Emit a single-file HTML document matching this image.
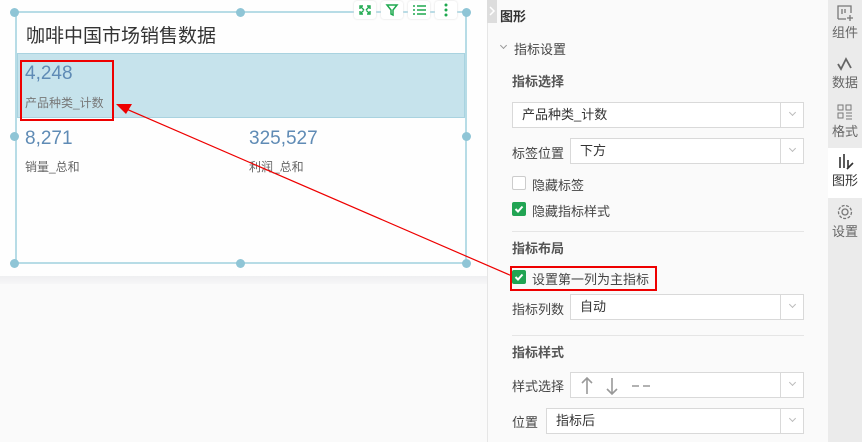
<!DOCTYPE html>
<html><head><meta charset="utf-8"><style>
*{margin:0;padding:0;box-sizing:border-box}
body{width:862px;height:442px;overflow:hidden;background:#fafafa;font-family:"Liberation Sans","Noto Sans CJK SC",sans-serif;position:relative;color:#333}
.a{position:absolute}
.h{position:absolute;width:9px;height:9px;border-radius:50%;background:#8fc5d6}
.sel{position:absolute;border:1px solid #d9d9d9;background:#fff;height:26px;font-size:13px;color:#333;line-height:24px;padding-left:9px}
.sel:after{content:"";position:absolute;right:0;top:0;width:22px;height:24px;border-left:1px solid #d9d9d9}
.sel i{position:absolute;right:8px;top:7px;width:5px;height:5px;border-right:1px solid #bbb;border-bottom:1px solid #bbb;transform:rotate(45deg)}
.lbl{position:absolute;font-size:13px;color:#444}
.b{font-weight:bold;color:#555}
.cb{position:absolute;width:14px;height:14px;border-radius:2px}
.sb{position:absolute;left:828px;width:34px;text-align:center;font-size:13px;color:#666}
</style></head><body>
<div class="a" style="left:0;top:0;width:487px;height:276px;background:#fefefe"></div>
<div class="a" style="left:0;top:276px;width:487px;height:8px;background:linear-gradient(#eeeff1,#f6f6f7)"></div>
<div class="a" style="left:487px;top:0;width:1px;height:442px;background:#e6e6e6"></div>
<div class="a" style="left:15px;top:11px;width:452px;height:253px;border:2px solid #b7dce6"></div>
<div class="h" style="left:10px;top:8px"></div><div class="h" style="left:236px;top:8px"></div><div class="h" style="left:462px;top:8px"></div>
<div class="h" style="left:10px;top:132px"></div><div class="h" style="left:462px;top:132px"></div>
<div class="h" style="left:10px;top:259px"></div><div class="h" style="left:236px;top:259px"></div><div class="h" style="left:462px;top:259px"></div>
<div class="a" style="left:354px;top:1px;width:22px;height:18px;background:#fff;border-radius:3px;box-shadow:0 0 2px #ddd"><svg width="22" height="18"><path d="M6 8V5h3M13 5h3v3M16 10v3h-3M9 13H6v-3M7 6l3 3M15 6l-3 3M15 12l-3-3M7 12l3-3" stroke="#1ea94f" stroke-width="1.4" fill="none"/></svg></div>
<div class="a" style="left:381px;top:1px;width:22px;height:18px;background:#fff;border-radius:3px;box-shadow:0 0 2px #ddd"><svg width="22" height="18"><path d="M6 4h10l-4 5v5l-2-1V9z" stroke="#1ea94f" stroke-width="1.5" fill="none"/></svg></div>
<div class="a" style="left:408px;top:1px;width:22px;height:18px;background:#fff;border-radius:3px;box-shadow:0 0 2px #ddd"><svg width="22" height="18"><path d="M5 5h2M9 5h9M5 9h2M9 9h9M5 13h2M9 13h9" stroke="#1ea94f" stroke-width="1.6"/></svg></div>
<div class="a" style="left:435px;top:1px;width:22px;height:18px;background:#fff;border-radius:3px;box-shadow:0 0 2px #ddd"><svg width="22" height="18"><circle cx="11" cy="4" r="1.5" fill="#1ea94f"/><circle cx="11" cy="9" r="1.5" fill="#1ea94f"/><circle cx="11" cy="14" r="1.5" fill="#1ea94f"/></svg></div>
<div class="a" style="left:26px;top:21px;font-size:19px;color:#333">咖啡中国市场销售数据</div>
<div class="a" style="left:17px;top:53px;width:448px;height:65px;background:#c6e3ec;border:1px solid #a9d3e0"></div>
<div class="a" style="left:25px;top:63px;font-size:19px;color:#5f8bb5">4,248</div>
<div class="a" style="left:25px;top:94px;font-size:12px;color:#777">产品种类_计数</div>
<div class="a" style="left:20px;top:60px;width:94px;height:61px;border:2px solid #e00"></div>
<div class="a" style="left:25px;top:128px;font-size:19px;color:#5f8bb5">8,271</div>
<div class="a" style="left:25px;top:158px;font-size:12px;color:#666">销量_总和</div>
<div class="a" style="left:249px;top:128px;font-size:19px;color:#5f8bb5">325,527</div>
<div class="a" style="left:249px;top:158px;font-size:12px;color:#666">利润_总和</div>
<div class="a" style="left:487px;top:0;width:10px;height:23px;background:#ddd"><svg width="10" height="23"><path d="M3 7l4 4-4 4" stroke="#fff" stroke-width="1.5" fill="none"/></svg></div>
<div class="a b" style="left:500px;top:6px;font-size:13px;color:#333">图形</div>
<div class="a" style="left:501px;top:43px;width:5px;height:5px;border-right:1px solid #999;border-bottom:1px solid #999;transform:rotate(45deg)"></div>
<div class="lbl" style="left:514px;top:39px;color:#444">指标设置</div>
<div class="lbl b" style="left:512px;top:71px">指标选择</div>
<div class="sel" style="left:512px;top:102px;width:292px">产品种类_计数<i></i></div>
<div class="lbl" style="left:512px;top:143px">标签位置</div>
<div class="sel" style="left:570px;top:138px;width:234px">下方<i></i></div>
<div class="cb" style="left:512px;top:176px;border:1px solid #ccc;background:#fff"></div>
<div class="lbl" style="left:532px;top:175px">隐藏标签</div>
<div class="cb" style="left:512px;top:202px;background:#21a453"><svg width="14" height="14"><path d="M3.5 7l2.5 2.5 4.5-5" stroke="#fff" stroke-width="2" fill="none"/></svg></div>
<div class="lbl" style="left:532px;top:201px">隐藏指标样式</div>
<div class="a" style="left:512px;top:231px;width:292px;height:1px;background:#e5e5e5"></div>
<div class="lbl b" style="left:512px;top:238px">指标布局</div>
<div class="a" style="left:510px;top:266px;width:147px;height:25px;border:2px solid #e00"></div>
<div class="cb" style="left:512px;top:270px;background:#21a453"><svg width="14" height="14"><path d="M3.5 7l2.5 2.5 4.5-5" stroke="#fff" stroke-width="2" fill="none"/></svg></div>
<div class="lbl" style="left:532px;top:269px">设置第一列为主指标</div>
<div class="lbl" style="left:512px;top:299px">指标列数</div>
<div class="sel" style="left:570px;top:294px;width:234px">自动<i></i></div>
<div class="a" style="left:512px;top:335px;width:292px;height:1px;background:#e5e5e5"></div>
<div class="lbl b" style="left:512px;top:342px">指标样式</div>
<div class="lbl" style="left:512px;top:376px">样式选择</div>
<div class="sel" style="left:570px;top:372px;width:234px;color:#999;padding-left:9px"><svg width="80" height="22" style="margin-top:2px"><path d="M7 3v16M2 8l5-5 5 5M32 3v16M27 14l5 5 5-5" stroke="#999" stroke-width="1.6" fill="none"/><path d="M52 11h7M63 11h7" stroke="#999" stroke-width="1.6"/></svg><i></i></div>
<div class="lbl" style="left:512px;top:412px">位置</div>
<div class="sel" style="left:546px;top:408px;width:258px">指标后<i></i></div>
<div class="a" style="left:828px;top:0;width:34px;height:442px;background:#ebebeb"></div>
<div class="a" style="left:828px;top:148px;width:34px;height:50px;background:#fff"></div>
<div class="sb" style="top:3px"><svg width="20" height="20"><path d="M3 16V3h13v7M3 16h8M7 6v5M10 6v4M15 12v6M12 15h6" stroke="#777" stroke-width="1.3" fill="none"/></svg><div style="margin-top:-4px">组件</div></div>
<div class="sb" style="top:54px"><svg width="20" height="18"><path d="M3 10l3 5 5-10 5 9" stroke="#666" stroke-width="1.8" fill="none"/></svg><div style="margin-top:-3px">数据</div></div>
<div class="sb" style="top:103px"><svg width="20" height="18"><rect x="3" y="2" width="5" height="5" stroke="#777" fill="none"/><rect x="3" y="10" width="5" height="5" stroke="#777" fill="none"/><rect x="11" y="2" width="5" height="5" stroke="#777" fill="none"/><path d="M11 10h6M11 13h6M11 16h6" stroke="#777"/></svg><div style="margin-top:-3px">格式</div></div>
<div class="sb" style="top:152px;color:#333"><svg width="20" height="18"><path d="M5 5v11M9 2v14M13 8v8M12 17l6-6" stroke="#333" stroke-width="1.6" fill="none"/></svg><div style="margin-top:-3px">图形</div></div>
<div class="sb" style="top:203px"><svg width="20" height="18"><circle cx="10" cy="9" r="3" stroke="#777" fill="none" stroke-width="1.3"/><circle cx="10" cy="9" r="6.5" stroke="#777" fill="none" stroke-width="1.3" stroke-dasharray="3 1.5"/></svg><div style="margin-top:-3px">设置</div></div>
<svg class="a" style="left:0;top:0" width="862" height="442"><path d="M512 276L124 108" stroke="#e00" stroke-width="1.2"/><path d="M116 104l16 0-6 10z" fill="#e00"/></svg>
</body></html>
